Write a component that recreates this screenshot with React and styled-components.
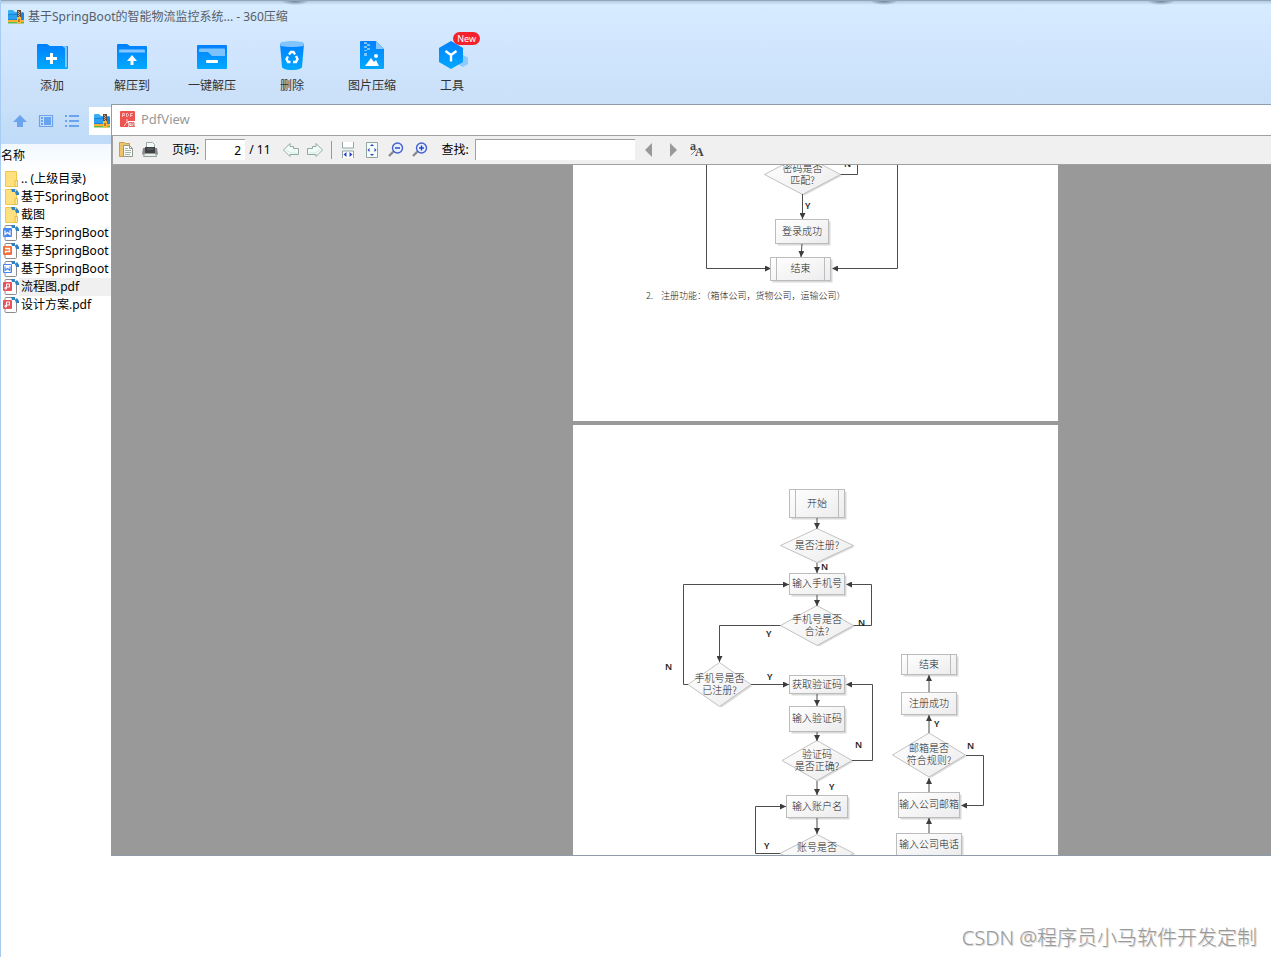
import React from 'react';
import styled, { createGlobalStyle } from 'styled-components';

const files = [
  { id: 1, name: '.. (上级目录)', type: 'folder' },
  { id: 2, name: '基于SpringBoot', type: 'folder', linked: true },
  { id: 3, name: '截图', type: 'folder', linked: true },
  { id: 4, name: '基于SpringBoot', type: 'doc', linked: true },
  { id: 5, name: '基于SpringBoot', type: 'ppt', linked: true },
  { id: 6, name: '基于SpringBoot', type: 'docx', linked: true },
  { id: 7, name: '流程图.pdf', type: 'pdf', linked: true, selected: true },
  { id: 8, name: '设计方案.pdf', type: 'pdf', linked: true },
];

const App = () => {
  return (
    <Desktop>
      <GlobalStyle />
      <Header>
        <TitleBar>
          <ArchiveIcon />
          <h1>基于SpringBoot的智能物流监控系统... - 360压缩</h1>
        </TitleBar>
        <Actions>
          <Action><AddIcon />添加</Action>
          <Action><ExtractIcon />解压到</Action>
          <Action><QuickIcon />一键解压</Action>
          <Action><TrashIcon />删除</Action>
          <Action><ImageZipIcon />图片压缩</Action>
          <Action><ToolsIcon />工具<Badge>New</Badge></Action>
        </Actions>
      </Header>
      <Body>
        <Sidebar>
          <PathBar>
            <ViewButton aria-label="向上"><UpIcon /></ViewButton>
            <ViewButton aria-label="预览"><PreviewIcon /></ViewButton>
            <ViewButton aria-label="列表"><ListIcon /></ViewButton>
            <PathBox><ArchiveIcon /></PathBox>
          </PathBar>
          <FileTable>
            <thead>
              <tr><th colSpan="2">名称</th></tr>
            </thead>
            <tbody>
              {files.map((file) => (
                <FileRow key={file.id} $selected={file.selected}>
                  <td><FileIcon type={file.type} linked={file.linked} /></td>
                  <td>{file.name}</td>
                </FileRow>
              ))}
            </tbody>
          </FileTable>
        </Sidebar>
        <PdfWindow>
          <PdfTitle><PdfLogo /><h2>PdfView</h2></PdfTitle>
          <PdfToolbar>
            <ToolButton aria-label="打开"><OpenIcon /></ToolButton>
            <ToolButton aria-label="打印"><PrintIcon /></ToolButton>
            <ToolLabel htmlFor="page">页码:</ToolLabel>
            <PageInput id="page" defaultValue="2" />
            <PageCount>/ 11</PageCount>
            <ToolButton aria-label="后退"><ArrowIcon /></ToolButton>
            <ToolButton aria-label="前进"><ArrowIcon right /></ToolButton>
            <Separator />
            <ToolButton aria-label="适合宽度"><FitWidthIcon /></ToolButton>
            <ToolButton aria-label="适合页面"><FitPageIcon /></ToolButton>
            <ToolButton aria-label="缩小"><ZoomIcon /></ToolButton>
            <ToolButton aria-label="放大"><ZoomIcon plus /></ToolButton>
            <ToolLabel htmlFor="find">查找:</ToolLabel>
            <FindInput id="find" />
            <ToolButton aria-label="上一个"><TriangleIcon /></ToolButton>
            <ToolButton aria-label="下一个"><TriangleIcon right /></ToolButton>
            <ToolButton aria-label="区分大小写"><CaseIcon /></ToolButton>
          </PdfToolbar>
          <Viewer>
            <LoginPage />
            <RegisterPage />
          </Viewer>
        </PdfWindow>
      </Body>
      <Footer>CSDN @程序员小马软件开发定制</Footer>
    </Desktop>
  );
};

export default App;

/* ---------- flow charts ---------- */

const ChartDefs = ({ id }) => (
  <defs>
    <linearGradient id={`${id}-fill`} x1="0" y1="0" x2="1" y2="1">
      <stop offset="0" stopColor="#ffffff" />
      <stop offset="1" stopColor="#ececee" />
    </linearGradient>
    <marker id={`${id}-arrow`} markerWidth="7" markerHeight="6" refX="6" refY="3" orient="auto" markerUnits="userSpaceOnUse">
      <path d="M0 0L6 3L0 6z" fill="#3c3c3c" />
    </marker>
  </defs>
);

const Box = ({ id, x, y, w, h, text, sub }) => (
  <g>
    <rect x={x + 2} y={y + 2} width={w} height={h} fill="#d9d9d9" />
    <rect x={x} y={y} width={w} height={h} fill={`url(#${id}-fill)`} stroke="#bcbcbc" />
    {sub && <path d={`M${x + 6} ${y}v${h}M${x + w - 6} ${y}v${h}`} stroke="#bcbcbc" />}
    <ChartText x={x + w / 2} y={y + h / 2 + 3}>{text}</ChartText>
  </g>
);

const Diamond = ({ id, x, y, rx, ry, lines }) => (
  <g>
    <path d={`M${x - rx + 2} ${y + 1}L${x + 2} ${y + ry + 1}L${x + rx + 2} ${y + 1}z`} fill="#dddddd" />
    <path d={`M${x - rx} ${y}L${x} ${y - ry}L${x + rx} ${y}L${x} ${y + ry}z`} fill={`url(#${id}-fill)`} stroke="#b4b4b4" strokeWidth="0.8" />
    {lines.map((line, i) => (
      <ChartText key={line} x={x} y={y + 3 + (i * 2 - lines.length + 1) * 6}>{line}</ChartText>
    ))}
  </g>
);

const Flow = ({ id, d }) => (
  <path d={d} fill="none" stroke="#4d4d4d" strokeWidth="1" markerEnd={`url(#${id}-arrow)`} />
);

const LoginPage = () => (
  <Page width="485" height="256" viewBox="0 0 485 256">
    <ChartDefs id="login" />
    <Flow id="login" d="M133.500 0V103.500H198" />
    <Flow id="login" d="M324.500 0V103.500H259" />
    <path d="M267 9.500H284.500V0" fill="none" stroke="#4d4d4d" />
    <Diamond id="login" x={229.5} y={9.5} rx={38} ry={20} lines={['密码是否', '匹配?']} />
    <Flow id="login" d="M229.500 29V54" />
    <Box id="login" x={202.5} y={54.5} w={53} h={24} text="登录成功" />
    <Flow id="login" d="M229 79L228 92" />
    <Box id="login" x={197.5} y={92.5} w={60} h={23} text="结束" sub />
    <Mark x="271" y="2">N</Mark>
    <Mark x="232" y="44">Y</Mark>
    <Caption x="73" y="134">2.</Caption>
    <Caption x="88" y="134">注册功能：（箱体公司，货物公司，运输公司）</Caption>
  </Page>
);

const RegisterPage = () => (
  <Page width="485" height="430" viewBox="0 0 485 430">
    <ChartDefs id="reg" />
    <Flow id="reg" d="M115 259.500H110.500V159.500H216" />
    <Flow id="reg" d="M280 200.500H298.500V159.500H273" />
    <Flow id="reg" d="M208 200.500H146.500V237" />
    <Flow id="reg" d="M178 259.500H216" />
    <Flow id="reg" d="M278 335.500H299.500V259.500H273" />
    <Flow id="reg" d="M208 428.500H182.500V381.500H213" />
    <Flow id="reg" d="M393 330.500H410.500V380.500H388" />
    <Box id="reg" x={216.5} y={64.5} w={55} h={28} text="开始" sub />
    <Diamond id="reg" x={244} y={120.5} rx={36.5} ry={17} lines={['是否注册?']} />
    <Box id="reg" x={216.5} y={148.5} w={55} h={21} text="输入手机号" />
    <Diamond id="reg" x={244} y={200.5} rx={36.5} ry={20} lines={['手机号是否', '合法?']} />
    <Diamond id="reg" x={146.5} y={259.5} rx={31.5} ry={22} lines={['手机号是否', '已注册?']} />
    <Box id="reg" x={216.5} y={250.5} w={55} h={18} text="获取验证码" />
    <Box id="reg" x={216.5} y={281.5} w={55} h={25} text="输入验证码" />
    <Diamond id="reg" x={244} y={335.5} rx={35} ry={20} lines={['验证码', '是否正确?']} />
    <Box id="reg" x={213.5} y={370.5} w={61} h={22} text="输入账户名" />
    <Diamond id="reg" x={244} y={428.5} rx={37} ry={19} lines={['账号是否', '']} />
    <Flow id="reg" d="M244 93V104" />
    <Flow id="reg" d="M244 138V148" />
    <Flow id="reg" d="M244 170V181" />
    <Flow id="reg" d="M244 269V281" />
    <Flow id="reg" d="M244 307V316" />
    <Flow id="reg" d="M244 356V370" />
    <Flow id="reg" d="M244 393V409" />
    <Box id="reg" x={328.5} y={229.5} w={55} h={20} text="结束" sub />
    <Box id="reg" x={328.5} y={267.5} w={55} h={22} text="注册成功" />
    <Diamond id="reg" x={356} y={330} rx={36.5} ry={22} lines={['邮箱是否', '符合规则?']} />
    <Box id="reg" x={325.5} y={367.5} w={61} h={25} text="输入公司邮箱" />
    <Box id="reg" x={323.5} y={408.5} w={65} h={22} text="输入公司电话" />
    <Flow id="reg" d="M356 267V250" />
    <Flow id="reg" d="M356 308V290" />
    <Flow id="reg" d="M356 367V353" />
    <Flow id="reg" d="M356 408V393" />
    <Mark x="248" y="145">N</Mark>
    <Mark x="285" y="201">N</Mark>
    <Mark x="193" y="212">Y</Mark>
    <Mark x="92" y="245">N</Mark>
    <Mark x="194" y="255">Y</Mark>
    <Mark x="282" y="323">N</Mark>
    <Mark x="256" y="365">Y</Mark>
    <Mark x="191" y="424">Y</Mark>
    <Mark x="361" y="302">Y</Mark>
    <Mark x="394" y="324">N</Mark>
  </Page>
);

/* ---------- icons ---------- */

const BlueGradient = ({ id }) => (
  <linearGradient id={id} x1="0" y1="0" x2="0" y2="1">
    <stop offset="0" stopColor="#0080ff" />
    <stop offset="1" stopColor="#00a9ff" />
  </linearGradient>
);

const ArchiveIcon = () => (
  <svg width="16" height="16" viewBox="0 0 16 16">
    <path d="M0 2a1 1 0 011-1h4l2 2h8a1 1 0 011 1v8H0z" fill="#39b0f5" />
    <path d="M0 5l16-1v7H0z" fill="#1c86dc" />
    <path d="M0 6h9v4H0z" fill="#2aa0ee" />
    <path d="M0 11h16v2H0z" fill="#ffae35" />
    <path d="M0 13h16v1.500H0z" fill="#65b945" />
    <path d="M9 1h4v9H9z" fill="#664a3c" />
    <path d="M10 2h1v1h-1zM11 3h1v1h-1zM10 4h1v1h-1zM11 5h1v1h-1zM10 6h1v1h-1zM11 7h1v1h-1z" fill="#c9ae8b" />
    <path d="M9 8h4v6.500H9z" fill="#ffb637" />
    <path d="M10.500 10h1v3h-1z" fill="#75400c" />
  </svg>
);

const AddIcon = () => (
  <svg width="32" height="32" viewBox="0 0 32 32">
    <defs><BlueGradient id="add" /></defs>
    <path d="M1 5a1 1 0 011-1h9l3 2h17a1 1 0 011 1v21a1 1 0 01-1 1H2a1 1 0 01-1-1z" fill="url(#add)" />
    <path d="M26 6h3.500A1.500 1.500 0 0131 7.500V26a1.500 1.500 0 01-1.500 1.500H29V9a2 2 0 00-1.500-2z" fill="#82c6ff" />
    <path d="M15.500 13v11M10 18.500h11" stroke="#fff" strokeWidth="3" />
  </svg>
);

const ExtractIcon = () => (
  <svg width="32" height="32" viewBox="0 0 32 32">
    <defs><BlueGradient id="extract" /></defs>
    <path d="M1 5a1 1 0 011-1h9l3 2h16a1 1 0 011 1v21a1 1 0 01-1 1H2a1 1 0 01-1-1z" fill="url(#extract)" />
    <path d="M3 12.500v-2a1 1 0 011-1h24a1 1 0 011 1v2z" fill="#86c7ff" />
    <path d="M16 15l5 6h-3.500v4h-3v-4H11z" fill="#fff" />
  </svg>
);

const QuickIcon = () => (
  <svg width="32" height="32" viewBox="0 0 32 32">
    <defs><BlueGradient id="quick" /></defs>
    <rect x="1" y="5" width="30" height="24" rx="1" fill="url(#quick)" />
    <path d="M3 12V9.500a1 1 0 011-1h24a1 1 0 011 1V16H16l-4-4z" fill="#7cc2ff" />
    <rect x="10" y="20" width="12" height="3" rx="1" fill="#fff" />
  </svg>
);

const TrashIcon = () => (
  <svg width="32" height="32" viewBox="0 0 32 32">
    <defs><BlueGradient id="trash" /></defs>
    <path d="M4 4h24l-2 23c0 1.500-4 3-10 3S6 28.500 6 27z" fill="url(#trash)" />
    <path d="M4 3.500C4 2 9 1 16 1s12 1 12 2.500L27.500 6Q16 8 4.500 6z" fill="#83c6ff" />
    <g fill="none" stroke="#fff" strokeWidth="2.400">
      <path d="M13 14.500l2-2.500h2.500l1.500 2.500" />
      <path d="M20 16l1.500 3-1.500 3h-3" />
      <path d="M14.500 22H12l-1.500-3 1.500-2.500" />
    </g>
  </svg>
);

const ImageZipIcon = () => (
  <svg width="32" height="32" viewBox="0 0 32 32">
    <defs><BlueGradient id="imagezip" /></defs>
    <path d="M4 2a1 1 0 011-1h15l8 8v19a1 1 0 01-1 1H5a1 1 0 01-1-1z" fill="url(#imagezip)" />
    <path d="M20 1l8 8h-8z" fill="#84c7ff" />
    <path d="M8 2h3v2H8zM11 4h3v2h-3zM8 6h3v2H8zM11 8h3v2h-3zM8 10h3v1H8zM8 13h3v3H8z" fill="#7cc3ff" />
    <circle cx="20" cy="16" r="2" fill="#fff" />
    <path d="M9 26l6-8 3 4 2-2 3 6z" fill="#fff" />
  </svg>
);

const ToolsIcon = () => (
  <svg width="32" height="32" viewBox="0 0 32 32">
    <defs><BlueGradient id="tools" /></defs>
    <path d="M27 15l5 2.500v6.500l-5 3-6-3v-6.500z" fill="#8ccaff" />
    <path d="M15 1l12 7v14l-12 7L3 22V8z" fill="url(#tools)" />
    <path d="M9.500 11l5.500 4 5.500-4M15 15v6.500" fill="none" stroke="#fff" strokeWidth="2.400" />
  </svg>
);

const UpIcon = () => (
  <svg width="16" height="16" viewBox="0 0 16 16">
    <path d="M8 2l7 7h-4v5H5V9H1z" fill="#6aa4ee" />
  </svg>
);

const PreviewIcon = () => (
  <svg width="16" height="16" viewBox="0 0 16 16">
    <path d="M1.500 2.500h13v11h-13z" fill="none" stroke="#6aa4ee" strokeWidth="1.200" />
    <path d="M3 4h2v2H3zM3 7h2v2H3zM3 10h2v2H3zM6 4h7v8H6z" fill="#6aa4ee" />
  </svg>
);

const ListIcon = () => (
  <svg width="16" height="16" viewBox="0 0 16 16">
    <path d="M1 2h2v2H1zM5 2h10v2H5zM1 7h2v2H1zM5 7h10v2H5zM1 12h2v2H1zM5 12h10v2H5z" fill="#6aa4ee" />
  </svg>
);

const badgeColors = { doc: '#4687f0', docx: '#4687f0', ppt: '#f2703a', pdf: '#e9535a' };

const FileIcon = ({ type, linked }) => (
  <svg width="18" height="18" viewBox="0 0 18 18">
    {type === 'folder' ? (
      <g>
        <path d="M4.500 1.500h11v15h-11z" fill="#ffe07e" stroke="#f0c651" />
        <path d="M14 10.500h2.500v6H14z" fill="#ffe9a0" stroke="#e8bb40" />
      </g>
    ) : (
      <g>
        <path d="M5 1.500h7l3.500 3.500v10.500a1 1 0 01-1 1H5a1 1 0 01-1-1v-13a1 1 0 011-1z" fill="#fff" stroke="#8c8c8c" />
        <rect x="2" y="4" width="9" height="9" rx="1" fill={badgeColors[type]} />
        {type === 'docx' && <rect x="3" y="5" width="7" height="7" fill="#fff" />}
        {type === 'doc' && <path d="M4 6.500v4l2.500-2 2.500 2v-4" fill="none" stroke="#fff" strokeWidth="1.200" />}
        {type === 'docx' && <path d="M4 6.500v4l2.500-2 2.500 2v-4" fill="none" stroke="#4687f0" strokeWidth="1.200" />}
        {type === 'ppt' && <path d="M4.500 11V9.500h4v-3h-4.500" fill="none" stroke="#fff" strokeWidth="1.300" />}
        {type === 'pdf' && <path d="M5.500 6h3v3h-3v2H4V9.500h1.500V6" fill="none" stroke="#fff" />}
      </g>
    )}
    {linked && <path d="M10 1h4v3h-3zM14 4l2-2 2 3v2h-3z" fill="#2d83c4" />}
  </svg>
);

const PdfLogo = () => (
  <svg width="16" height="17" viewBox="0 0 16 17">
    <rect width="15" height="16" rx="1" fill="#ef5350" />
    <path d="M2.500 6V2.500h2v2h-2M6.500 2.500v3h1l1-1v-1l-1-1zM10.500 6V2.500h2.500M10.500 4.500h2" fill="none" stroke="#ffd5d3" strokeWidth="0.800" />
    <path d="M7 8v3l-3 4M7 11l2 1" fill="none" stroke="#ffd5d3" />
    <rect x="8" y="10" width="8" height="7" fill="#fff" />
    <path d="M9 11.500h5v4H9z" fill="#fff" stroke="#df6d69" />
    <circle cx="12" cy="13" r="1.200" fill="none" stroke="#df6d69" />
    <path d="M13 14l2 2" stroke="#df6d69" />
  </svg>
);

const OpenIcon = () => (
  <svg width="16" height="16" viewBox="0 0 16 16">
    <path d="M1.500.5h5l1 1h4v13h-10z" fill="#edc46c" stroke="#c99f49" />
    <path d="M5.500 3.500h6l3 3v8h-9z" fill="#fafcf8" stroke="#909b90" />
    <path d="M7 6.500h3M7 8.500h6M7 10.500h6M7 12.500h5" stroke="#a6b2ac" />
    <path d="M11.500 3.500v3h3" fill="none" stroke="#909b90" />
  </svg>
);

const PrintIcon = () => (
  <svg width="16" height="16" viewBox="0 0 16 16">
    <path d="M4.500.5h6l2 2v5h-8z" fill="#f3faf8" stroke="#9aa8a4" />
    <path d="M1 6h14l1 6.500H0z" fill="#85868a" />
    <path d="M3 5h10v6H3z" fill="#3f4144" />
    <path d="M5 6h6v2H5z" fill="#55585e" />
    <path d="M2.500 11.500h11l1 3h-13z" fill="#e6efec" stroke="#929b98" />
  </svg>
);

const ArrowIcon = ({ right }) => (
  <svg width="16" height="16" viewBox="0 0 16 16">
    <path
      d={right ? 'M15.500 8L9 1.500V4.500H5.500V6.500H.5v6H9v2z' : 'M.5 8L7 1.500V4.500h3.500v2h5v6H7v2z'}
      fill="#f1fbf7"
      stroke="#91a9a2"
    />
    <path d={right ? 'M2 11l6 0l5-3' : 'M14 11H8L3 8'} fill="none" stroke="#d3e9e1" />
  </svg>
);

const FitWidthIcon = () => (
  <svg width="16" height="18" viewBox="0 0 16 18">
    <path d="M2.500 1v6h11V1M2.500 17v-7h11v7" fill="#fff" stroke="#8fa6a3" />
    <path d="M3.500 13.500L6.500 11v5zM12.500 13.500L9.500 11v5z" fill="#2945c4" />
  </svg>
);

const FitPageIcon = () => (
  <svg width="16" height="18" viewBox="0 0 16 18">
    <path d="M2.500 1.500h11v15h-11z" fill="#f4fcfb" stroke="#8fa6a3" />
    <path d="M8 3l2 2H6zM8 15l2-2H6zM3.500 9l2-2v4zM12.500 9l-2-2v4z" fill="#2945c4" />
  </svg>
);

const ZoomIcon = ({ plus }) => (
  <svg width="16" height="16" viewBox="0 0 16 16">
    <path d="M6 9L1 14" stroke="#8b8b94" strokeWidth="2.400" />
    <circle cx="9.500" cy="6" r="5" fill="#e5efff" stroke="#4562cc" strokeWidth="1.400" />
    <path d="M7 6h5" stroke="#2440bd" strokeWidth="1.400" />
    {plus && <path d="M9.500 3.500v5" stroke="#2440bd" strokeWidth="1.400" />}
  </svg>
);

const TriangleIcon = ({ right }) => (
  <svg width="16" height="16" viewBox="0 0 16 16">
    <path d={right ? 'M5 1v14l7-7z' : 'M11 1v14L4 8z'} fill="#999" />
  </svg>
);

const CaseIcon = () => (
  <svg width="18" height="18" viewBox="0 0 18 18">
    <text x="2" y="9" fontFamily="Liberation Serif, serif" fontWeight="700" fontSize="12" fill="#444">a</text>
    <text x="7" y="15" fontFamily="Liberation Serif, serif" fontWeight="700" fontSize="12" fill="#444">A</text>
    <path d="M3 14L9 8" stroke="#888" />
  </svg>
);

/* ---------- styles ---------- */

const GlobalStyle = createGlobalStyle`
  * {
    box-sizing: border-box;
  }

  body {
    margin: 0;
    background: #fff;
    color: #000;
    font-family: 'Noto Sans', 'Noto Sans CJK SC', sans-serif;
    font-size: 12px;
    line-height: 18px;
  }

  h1, h2 {
    margin: 0;
    font-weight: 400;
  }

  button {
    padding: 0;
    border: 0;
    background: none;
    font: inherit;
    color: inherit;
  }

  svg {
    display: block;
    flex-shrink: 0;
  }
`;

const Desktop = styled.div`
  display: flex;
  flex-direction: column;
  min-height: 100vh;
  overflow: hidden;
  border-left: 1px solid #a8cdf3;
`;

const Header = styled.header`
  border-top: 1px solid #91a6ba;
  background:
    radial-gradient(14px 4px at 294px 0, #6d839a, transparent),
    radial-gradient(14px 4px at 883px 0, #6d839a, transparent),
    radial-gradient(14px 4px at 1160px 0, #6d839a, transparent),
    linear-gradient(#b4cadf, transparent 4px),
    linear-gradient(#d7ecff, #cfe4fd 60%, #c9e0f8);
`;

const TitleBar = styled.div`
  display: flex;
  align-items: center;
  gap: 4px;
  height: 31px;
  padding-left: 7px;

  h1 {
    font-size: 12px;
    color: #555e68;
  }
`;

const Actions = styled.div`
  display: flex;
  height: 72px;
  padding: 8px 0 0 11px;
`;

const Action = styled.button`
  position: relative;
  display: flex;
  flex-direction: column;
  align-items: center;
  gap: 5px;
  width: 80px;
  color: #333;
`;

const Badge = styled.span`
  position: absolute;
  top: -8px;
  right: 12px;
  padding: 0 4px;
  border-radius: 7px;
  background: #f5222d;
  color: #fff;
  font-size: 9px;
  line-height: 13px;
`;

const Body = styled.main`
  display: flex;
`;

const Sidebar = styled.aside`
  width: 110px;
  flex-shrink: 0;
  overflow: hidden;
`;

const PathBar = styled.div`
  display: flex;
  align-items: center;
  height: 40px;
  padding: 0 0 6px 6px;
  background: linear-gradient(#c9e0f8, #bfdbf9);
`;

const ViewButton = styled.button`
  display: flex;
  flex-shrink: 0;
  justify-content: center;
  width: 26px;
`;

const PathBox = styled.div`
  display: flex;
  flex: 1 0 auto;
  align-items: center;
  height: 28px;
  margin-left: 4px;
  padding-left: 5px;
  background: #fff;
`;

const FileTable = styled.table`
  width: 100%;
  border-collapse: collapse;

  th {
    height: 26px;
    padding: 0 0 3px;
    background: linear-gradient(#f1f8ff, #fff);
    font-weight: 400;
    text-align: left;
  }
`;

const FileRow = styled.tr`
  td {
    height: 18px;
    padding: 0;
    white-space: nowrap;
  }

  td:last-child {
    width: 100%;
    padding-left: 2px;
    background: ${(props) => (props.$selected ? '#f0f0f0' : 'transparent')};
  }
`;

const PdfWindow = styled.section`
  flex: 1;
  margin-right: -248px;
  border: 1px solid #8f9dab;
  background: #fff;
`;

const PdfTitle = styled.div`
  display: flex;
  align-items: center;
  gap: 5px;
  height: 30px;
  padding: 0 0 2px 8px;

  h2 {
    font-size: 13px;
    color: #999;
  }
`;

const PdfToolbar = styled.div`
  display: flex;
  align-items: center;
  height: 30px;
  padding: 0 0 1px 1px;
  border: 1px solid #a0a0a0;
  border-right: 0;
  background: #f0f0f0;
`;

const ToolButton = styled.button`
  display: flex;
  justify-content: center;
  width: 24px;
`;

const ToolLabel = styled.label`
  padding: 0 6px 0 10px;
`;

const ToolInput = styled.input`
  height: 21px;
  padding: 0 4px;
  border: 0;
  border-top: 1px solid #a0a0a0;
  border-left: 1px solid #a0a0a0;
  background: #fff;
  font: inherit;
`;

const PageInput = styled(ToolInput)`
  width: 40px;
  text-align: right;
`;

const FindInput = styled(ToolInput)`
  width: 160px;
  margin-right: 2px;
`;

const PageCount = styled.span`
  padding: 0 8px 0 4px;
`;

const Separator = styled.span`
  width: 1px;
  height: 18px;
  margin: 0 4px;
  background: #999;
`;

const Viewer = styled.div`
  display: flex;
  flex-direction: column;
  align-items: center;
  gap: 4px;
  background: #999;
`;

const Page = styled.svg`
  background: #fff;
`;

const ChartText = styled.text`
  font-family: 'Noto Sans CJK SC', sans-serif;
  font-size: 10px;
  font-weight: 300;
  text-anchor: middle;
  fill: #222;
`;

const Mark = styled.text`
  font-family: 'Noto Sans', sans-serif;
  font-size: 9px;
  font-weight: 600;
  fill: #222;
`;

const Caption = styled.text`
  font-family: 'Noto Sans CJK SC', sans-serif;
  font-size: 9px;
  font-weight: 300;
  fill: #222;
`;

const Footer = styled.footer`
  margin-top: auto;
  padding: 0 14px 6px;
  color: #999;
  font-size: 20px;
  font-weight: 300;
  line-height: 26px;
  text-align: right;
  text-shadow: 1px 1px 1px #ccc;
`;
